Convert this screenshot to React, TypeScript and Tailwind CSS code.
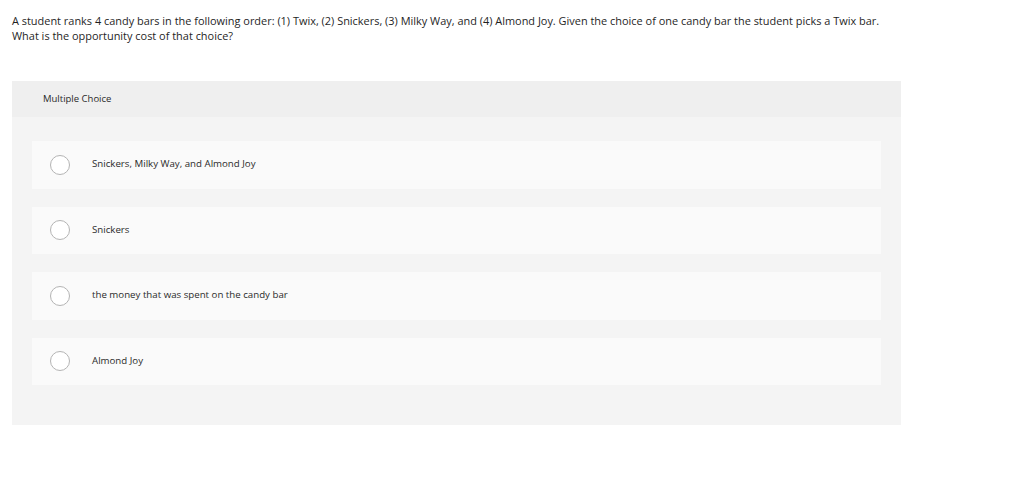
import React from 'react';

const choices = [
  'Snickers, Milky Way, and Almond Joy',
  'Snickers',
  'the money that was spent on the candy bar',
  'Almond Joy',
];

const Radio: React.FC = () => (
  <span className="w-[20px] h-[20px] rounded-full border border-[#b4b4b4] bg-white flex-shrink-0" />
);

export default function App() {
  return (
    <div className="w-[1024px] h-[498px] bg-white text-[#1f1f1f] font-['Open_Sans','Liberation_Sans',sans-serif]">
      <div className="pt-[13px] px-[12px]">
        <p className="text-[10.95px] leading-[15px]">
          A student ranks 4 candy bars in the following order: (1) Twix, (2) Snickers, (3) Milky Way, and (4) Almond Joy. Given the choice of one candy bar the student picks a Twix bar.
          <br />
          What is the opportunity cost of that choice?
        </p>
      </div>

      <div className="mt-[38px] ml-[12px] w-[889px] bg-[#f4f4f4]">
        <div className="h-[36px] bg-[#efefef] flex items-center pl-[31px]">
          <span className="text-[9.5px] text-[#2a2a2a]">Multiple Choice</span>
        </div>

        <div className="px-[20px] pt-[24px] pb-[40px] flex flex-col gap-[18px]">
          {choices.map((c) => (
            <div key={c} className="h-[47.5px] bg-[#fafafa] flex items-center pl-[18px]">
              <Radio />
              <span className="ml-[22px] text-[9.7px] text-[#2a2a2a]">{c}</span>
            </div>
          ))}
        </div>
      </div>
    </div>
  );
}
